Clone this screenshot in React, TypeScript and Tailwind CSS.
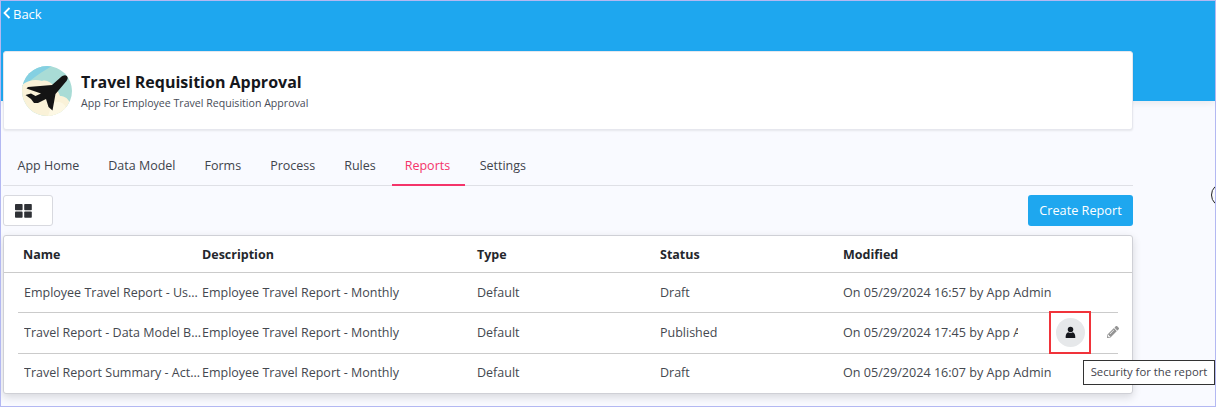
import React from "react";
import { FaPencilAlt } from "react-icons/fa";

const font = { fontFamily: '"Open Sans", "Noto Sans", sans-serif' };

const tabs = ["App Home", "Data Model", "Forms", "Process", "Rules", "Reports", "Settings"];

const rows = [
  { name: "Employee Travel Report - Us...", modified: "On 05/29/2024 16:57 by App Admin", status: "Draft" },
  { name: "Travel Report - Data Model B...", modified: "On 05/29/2024 17:45 by App Admin", status: "Published", active: true },
  { name: "Travel Report Summary - Act...", modified: "On 05/29/2024 16:07 by App Admin", status: "Draft" },
];

function Plane() {
  return (
    <svg viewBox="0 0 50 50" className="w-[50px] h-[50px] shrink-0">
      <defs>
        <clipPath id="c"><circle cx="25" cy="25" r="25" /></clipPath>
      </defs>
      <g clipPath="url(#c)">
        <rect width="50" height="50" fill="#a9dcd6" />
        <path d="M0 0H30C20 6 10 12 3 20L0 20Z" fill="#84d0e2" />
        <path d="M0 19C6 14 14 13 20 15C28 12 36 24 38 30C44 30 50 34 50 50H0Z" fill="#faf2d8" />
        <path d="M30 38C36 34 42 36 44 42V50H26Z" fill="#fdf8e4" />
        <path
          fill="#141414"
          d="M45 10C43 8.5 41 9.5 39 11L30 19L6 21L4.5 22.5L19 27.5L13.5 30L9 27.5L3.5 29L9 33L12 37L16 37L24 33L26.5 41L30.5 44.5L33.5 28L44.5 15C46 13 46 11 45 10Z"
        />
      </g>
    </svg>
  );
}

export default function App() {
  return (
    <div style={font} className="w-[1216px] h-[407px] overflow-hidden relative bg-[#f9faff] border border-[#b3b8f2] text-[#3a3f47]">
      <div className="h-[100px] bg-[#1ea7ef] shadow-[0_2px_8px_rgba(0,0,0,0.08)] pl-[2px] pt-[4px]">
        <div className="flex items-center text-white text-[13px] leading-[18px]">
          <svg viewBox="0 0 8 12" className="w-[8px] h-[12px] mr-[2px] mt-[-3px]">
            <path d="M6.5 1L1.5 6L6.5 11" fill="none" stroke="white" strokeWidth="1.8" />
          </svg>
          <span>Back</span>
        </div>
      </div>

      <div className="relative mt-[-50px] ml-[2px] w-[1130px] h-[79px] bg-white rounded-[3px] border border-[#e6e7ee] shadow-[0_1px_2px_rgba(0,0,0,0.08)] flex items-center pl-[18px] gap-[9px]">
        <Plane />
        <div>
          <div className="text-[16px] leading-[21px] font-bold text-[#15171c]">Travel Requisition Approval</div>
          <div className="text-[10.6px] leading-[14px] mt-[3px] text-[#474c57]">App For Employee Travel Requisition Approval</div>
        </div>
      </div>

      <div className="mt-[18px] ml-[2px] w-[1130px] h-[38px] border-b border-[#dfe0e6] flex text-[12.5px]">
        {tabs.map((t) => (
          <div
            key={t}
            className={
              t === "Reports"
                ? "h-[38px] ml-[1.5px] pl-[13px] pr-[15px] leading-[36px] text-[#f4346a] border-b-2 border-[#f4346a]"
                : "h-[37px] px-[14.5px] leading-[36px] text-[#3f444c]"
            }
          >
            {t}
          </div>
        ))}
      </div>

      <div className="mt-[9px] ml-[2px] w-[1130px] flex items-center justify-between">
        <div className="w-[50px] h-[31px] bg-white border border-[#d8d9df] rounded-[3px] flex items-center pl-[11px]">
          <svg viewBox="0 0 17 14" className="w-[17px] h-[14px]">
            <rect x="0" y="0" width="7.6" height="6.2" rx="0.8" fill="#2f3136" />
            <rect x="9.2" y="0" width="7.6" height="6.2" rx="0.8" fill="#2f3136" />
            <rect x="0" y="7.6" width="7.6" height="6.2" rx="0.8" fill="#2f3136" />
            <rect x="9.2" y="7.6" width="7.6" height="6.2" rx="0.8" fill="#2f3136" />
          </svg>
        </div>
        <div className="w-[105px] h-[31px] bg-[#1ea7ef] rounded-[3px] text-white text-[12.7px] font-medium flex items-center justify-center">
          Create Report
        </div>
      </div>

      <div className="mt-[9px] ml-[2px] w-[1130px] h-[159px] bg-white rounded-[3px] border border-[#cfd0d6] shadow-[0_3px_8px_rgba(0,0,0,0.14)] text-[12.5px] text-[#44484f]">
        <div className="grid grid-cols-[179px_275px_183px_183px_1fr] h-[37px] pt-[2px] items-center border-b border-[#cbcbcb] pl-[19px] pr-[14px] font-bold text-[#24272c] text-[12.5px]">
          <div>Name</div>
          <div>Description</div>
          <div>Type</div>
          <div>Status</div>
          <div>Modified</div>
        </div>
        <div className="mx-[14px]">
          {rows.map((r, i) => (
            <div
              key={r.name}
              className={
                "grid grid-cols-[178px_275px_183px_183px_1fr] items-center pl-[6px] relative " +
                (i === 0 ? "h-[40px] pt-[2px] " : i === 1 ? "h-[41px] " : "h-[40px] pb-[2px] ") +
                (i < 2 ? "border-b border-[#cbcbcb]" : "")
              }
            >
              <div className="whitespace-nowrap overflow-hidden">{r.name}</div>
              <div className="whitespace-nowrap">Employee Travel Report - Monthly</div>
              <div>Default</div>
              <div>{r.status}</div>
              <div className={"whitespace-nowrap text-[12.6px] " + (r.active ? "w-[175px] overflow-hidden" : "")}>{r.modified}</div>
              {r.active && (
                <>
                  <div className="absolute left-[1031px] top-[-2px] w-[42px] h-[43px] border-2 border-[#f0333a] flex items-center justify-center">
                    <div className="w-[29px] h-[29px] rounded-full bg-[#e6e8ea] flex items-center justify-center">
                      <svg viewBox="0 0 12 13" className="w-[11px] h-[13px]">
                        <circle cx="6" cy="3.2" r="3" fill="#15171c" />
                        <path d="M0.8 12.6C0.4 8.4 2 6.6 3.6 6.2C5 7.2 7 7.2 8.4 6.2C10 6.6 11.6 8.4 11.2 12.6Z" fill="#15171c" />
                      </svg>
                    </div>
                  </div>
                  <FaPencilAlt className="absolute left-[1089px] top-[13px] w-[12px] h-[12px] text-[#949494]" />
                </>
              )}
            </div>
          ))}
        </div>
      </div>

      <div className="absolute left-[1082px] top-[359px] w-[132px] h-[25px] bg-white border border-[#333] text-[11.3px] text-[#3f444c] flex items-center justify-center whitespace-nowrap">
        Security for the report
      </div>
      <div className="absolute left-[1210px] top-[182px] w-[24px] h-[24px] rounded-full border border-[#222]" />
    </div>
  );
}
